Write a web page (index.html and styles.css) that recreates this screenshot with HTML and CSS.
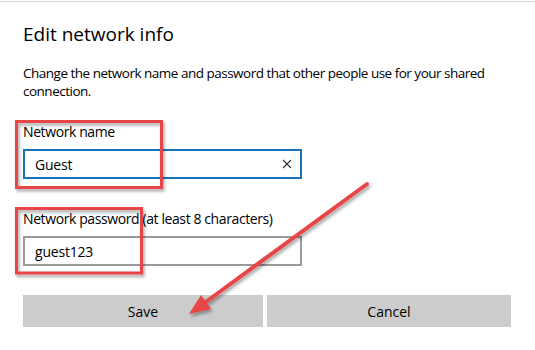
FILE: index.html
```html
<!DOCTYPE html>
<html lang="en">
  <head>
    <meta charset="UTF-8" />
    <meta name="viewport" content="width=device-width, initial-scale=1.0" />
    <title>Edit network info</title>
    <link rel="stylesheet" href="styles.css">
  </head>
  <body>
    <div class="dialog">
      <h1 class="title">Edit network info</h1>
      <p class="desc">Change the network name and password that other people use for your shared connection.</p>

      <div class="field">
        <label class="label">Network name</label>
        <div class="textbox focused">
          <span class="value">Guest</span>
          <svg class="clear" width="10" height="10" viewBox="0 0 10 10">
            <path d="M1 1 L9 9 M9 1 L1 9" stroke="#333" stroke-width="1.1" fill="none" />
          </svg>
        </div>
      </div>

      <div class="field second">
        <label class="label">Network password (at least 8 characters)</label>
        <div class="textbox">
          <span class="value">guest123</span>
        </div>
      </div>

      <div class="actions">
        <button class="btn">Save</button>
        <button class="btn">Cancel</button>
      </div>

      <!-- annotation layer -->
      <svg class="annot" width="535" height="350" viewBox="0 0 535 350">
        <defs>
          <filter id="shadow" x="-20%" y="-20%" width="140%" height="140%">
            <feDropShadow dx="1.5" dy="2.5" stdDeviation="1.5" flood-color="#000" flood-opacity="0.35" />
          </filter>
        </defs>
        <g filter="url(#shadow)" fill="none" stroke="#e8454a" stroke-width="3">
          <rect x="16.5" y="121.5" width="145" height="66" />
          <rect x="16.5" y="208.5" width="125" height="64.5" />
        </g>
        <g filter="url(#shadow)">
          <line x1="367" y1="184" x2="203" y2="304" stroke="#e8454a" stroke-width="4" stroke-linecap="round" />
          <polygon points="189,314 211,309 201,295" fill="#e8454a" />
        </g>
      </svg>
    </div>
  </body>
</html>
```

FILE: styles.css
```css
body {
  margin: 0;
  padding: 0;
  background: #fff;
  font-family: 'Open Sans', 'Noto Sans', sans-serif;
  color: #000;
}
.dialog {
  position: relative;
  width: 535px;
  height: 348px;
  margin-top: 1px;
  border-top: 1px solid #d6d6d6;
  padding: 0 0 0 23px;
  box-sizing: border-box;
  overflow: hidden;
}
.title {
  margin: 18px 0 0;
  font-size: 19px;
  line-height: 28px;
  font-weight: 400;
}
.desc {
  margin: 16px 0 0;
  width: 496px;
  font-size: 13.5px;
  line-height: 18px;
  letter-spacing: -0.5px;
}
.field {
  margin-top: 23px;
}
.field.second {
  margin-top: 31px;
}
.label {
  display: block;
  font-size: 14px;
  line-height: 18px;
  letter-spacing: -0.4px;
  margin-bottom: 8px;
}
.textbox {
  width: 279px;
  height: 30px;
  box-sizing: border-box;
  border: 2px solid #999;
  display: flex;
  align-items: center;
  justify-content: space-between;
  padding: 0 8px 0 10px;
}
.textbox.focused {
  border-color: #1a73b9;
}
.value {
  font-size: 14px;
  letter-spacing: -0.2px;
}
.clear {
  display: block;
}
.actions {
  margin-top: 29px;
  width: 488px;
  display: grid;
  grid-template-columns: 240px 244px;
  gap: 4px;
}
.btn {
  height: 32px;
  border: none;
  background: #cccccc;
  font-family: 'Open Sans', 'Noto Sans', sans-serif;
  font-size: 14px;
  color: #000;
  padding: 0;
}
.annot {
  position: absolute;
  left: 0;
  top: -2px;
  pointer-events: none;
}
```
